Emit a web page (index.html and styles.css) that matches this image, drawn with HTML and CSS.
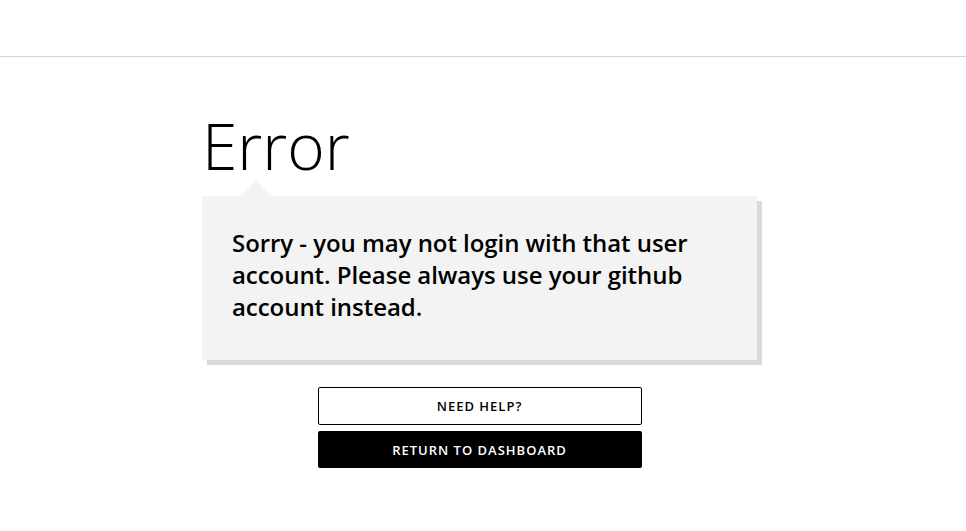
FILE: index.html
```html
<!DOCTYPE html>
<html>
<head>
<meta charset="utf-8">
<link rel="stylesheet" href="styles.css">
</head>
<body>
<header class="topbar"></header>
<main class="wrap">
  <h1 class="title">Error</h1>
  <div class="callout">
    <p>Sorry - you may not login with that user account. Please always use your github account instead.</p>
  </div>
  <div class="actions">
    <a class="btn btn-outline" href="#">Need help?</a>
    <a class="btn btn-solid" href="#">Return to dashboard</a>
  </div>
</main>
</body>
</html>
```
FILE: styles.css
```css
html, body {
  margin: 0;
  padding: 0;
  background: #fff;
  font-family: "Open Sans", "Liberation Sans", sans-serif;
  color: #000;
}
.topbar {
  height: 56px;
  border-bottom: 1px solid #d4d4d4;
}
.wrap {
  width: 562px;
  margin: 0 auto;
  padding-top: 44px;
}
.title {
  margin: 0;
  font-weight: 300;
  font-size: 64px;
  line-height: 90px;
}
.callout {
  position: relative;
  margin-top: 5px;
  width: 555px;
  box-sizing: border-box;
  background: #f3f3f3;
  box-shadow: 5px 5px 0 #dadada;
  padding: 31px 30px 37px;
}
.callout::before {
  content: "";
  position: absolute;
  top: -15px;
  left: 39px;
  border-left: 15px solid transparent;
  border-right: 15px solid transparent;
  border-bottom: 15px solid #f3f3f3;
}
.callout p {
  margin: 0;
  font-size: 24px;
  line-height: 32px;
  font-weight: 600;
  letter-spacing: -0.05px;
}
.actions {
  width: 555px;
  margin-top: 27px;
  display: flex;
  flex-direction: column;
  align-items: center;
  gap: 6px;
}
.btn {
  width: 324px;
  box-sizing: border-box;
  height: 37px;
  display: flex;
  align-items: center;
  justify-content: center;
  text-decoration: none;
  text-transform: uppercase;
  font-size: 13px;
  font-weight: 600;
  letter-spacing: 1px;
  border-radius: 2px;
}
.btn-outline {
  border: 1px solid #000;
  color: #000;
  background: #fff;
  height: 38px;
}
.btn-solid {
  background: #000;
  color: #fff;
}
```
